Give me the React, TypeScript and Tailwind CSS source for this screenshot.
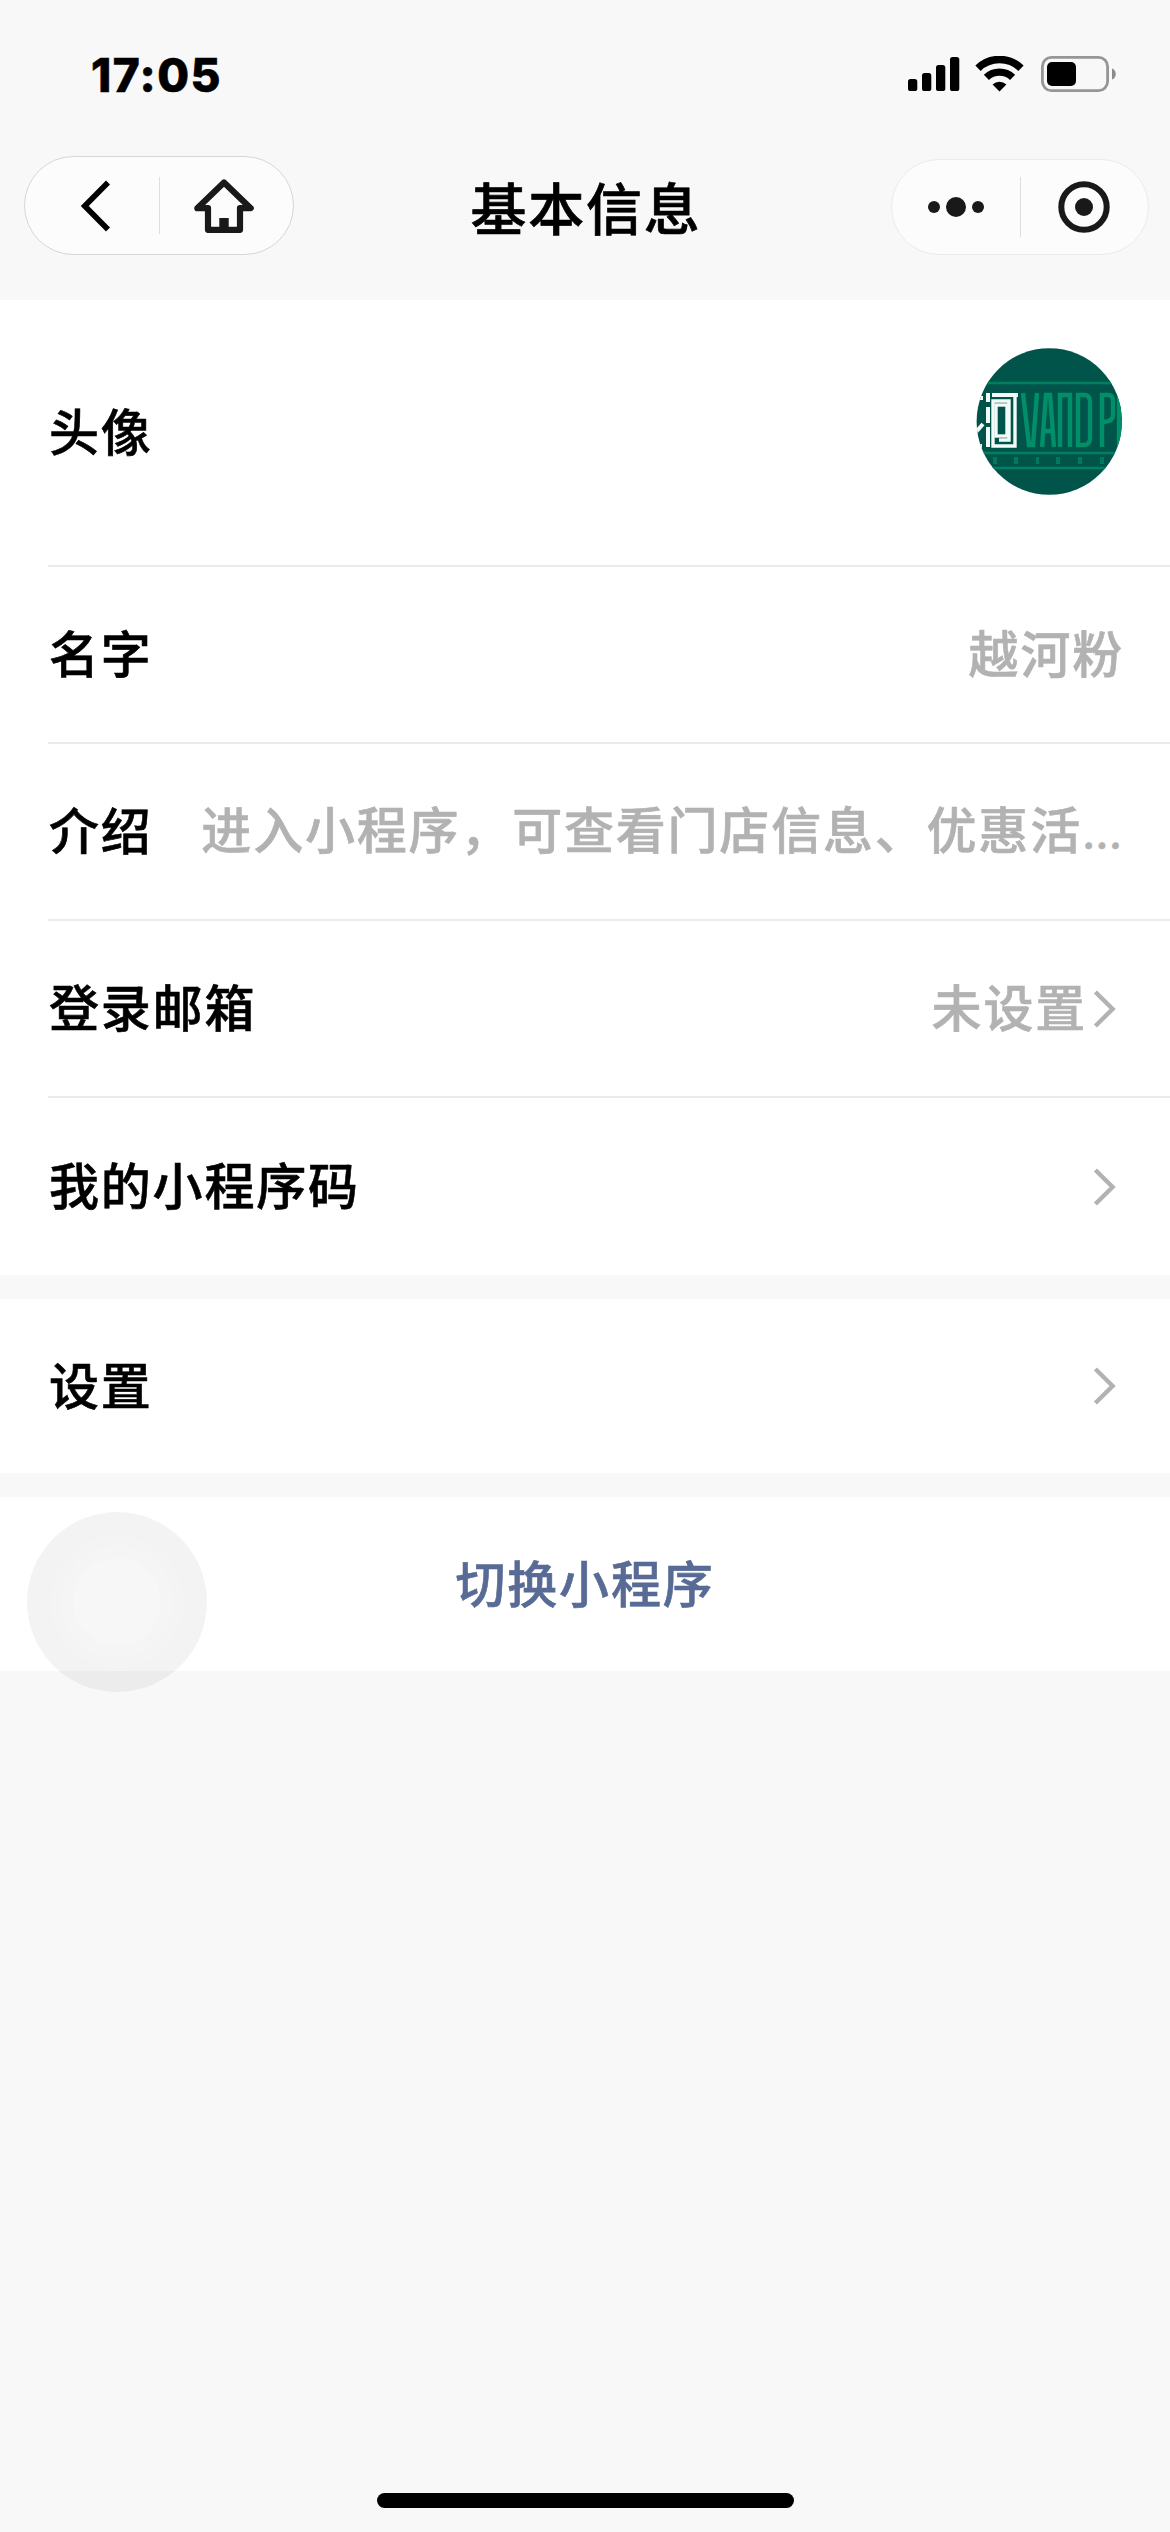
import type { ReactNode } from 'react'

function StatusBar() {
  return (
    <div className="flex h-[144px] items-start justify-between pt-[46px] pr-[54px] pl-[91px]">
      <span className="font-['Inter'] text-[46px] leading-[58px] font-extrabold tracking-[1.4px] text-black">
        17:05
      </span>
      <div className="flex items-center pt-[10px]">
        <svg width="52" height="36" viewBox="0 0 52 36">
          <rect x="0" y="23" width="9.3" height="12" rx="2.6" />
          <rect x="14" y="17" width="9.3" height="18" rx="2.6" />
          <rect x="28" y="9" width="9.3" height="26" rx="2.6" />
          <rect x="42" y="1" width="9.3" height="34" rx="2.6" />
        </svg>
        <svg className="ml-[15px]" width="50" height="36" viewBox="0 0 50 36">
          <path d="M3 12.2A31 31 0 0 1 46 12.2" fill="none" stroke="#000" strokeWidth="7.6" />
          <path d="M11.4 21.4A19 19 0 0 1 37.6 21.4" fill="none" stroke="#000" strokeWidth="7.4" />
          <path d="M24.5 35.4L17.6 28.4A10 10 0 0 1 31.4 28.4Z" />
        </svg>
        <svg className="ml-[16px]" width="75" height="36" viewBox="0 0 75 36">
          <rect x="1.4" y="1.4" width="65.2" height="33.2" rx="9" fill="none" stroke="#969696" strokeWidth="2.8" />
          <rect x="6" y="6" width="29" height="24" rx="5" />
          <path d="M71 12.5C76 14 76 22 71 23.5Z" fill="#8c8c8c" />
        </svg>
      </div>
    </div>
  )
}

function NavBar() {
  return (
    <div className="flex h-[156px] items-start justify-between pr-[21px] pl-[24px]">
      <div className="mt-[12px] flex h-[99px] w-[270px] items-center rounded-full border border-[#d6d6d6] bg-[#fcfcfc]">
        <div className="flex h-full w-[134px] items-center justify-center">
          <svg className="ml-[8px]" width="30" height="52" viewBox="0 0 30 52">
            <path d="M27 2.5L3.8 26L27 49.5" fill="none" stroke="#000" strokeWidth="5.6" />
          </svg>
        </div>
        <div className="h-[57px] w-px bg-[#dedede]" />
        <div className="flex h-full flex-1 items-center justify-center">
          <svg className="mr-[6px]" width="60" height="54" viewBox="0 0 60 54">
            <path
              d="M30 3.4L56.7 29.2H46V50.8H14V29.2H3.3Z"
              fill="none"
              stroke="#191919"
              strokeWidth="6.2"
              strokeLinejoin="round"
            />
            <rect x="25.3" y="39" width="9.4" height="12" fill="#191919" />
          </svg>
        </div>
      </div>
      <h1 className="mt-[22px] mr-[13px] text-[56px] leading-[80px] font-medium tracking-[1.8px] text-black [-webkit-text-stroke:0.7px]">
        基本信息
      </h1>
      <div className="mt-[15px] flex h-[96px] w-[258px] items-center rounded-full border border-[#ebebeb] bg-[#fcfcfc]">
        <div className="flex h-full w-[128px] items-center justify-center gap-[6px]">
          <span className="size-[12px] rounded-full bg-[#191919]" />
          <span className="size-[20px] rounded-full bg-[#191919]" />
          <span className="size-[12px] rounded-full bg-[#191919]" />
        </div>
        <div className="h-[60px] w-px bg-[#dedede]" />
        <div className="flex h-full flex-1 items-center justify-center">
          <svg width="52" height="52" viewBox="0 0 52 52">
            <circle cx="26" cy="26" r="22.7" fill="none" stroke="#191919" strokeWidth="6" />
            <circle cx="26" cy="26" r="9" fill="#191919" />
          </svg>
        </div>
      </div>
    </div>
  )
}

function Avatar() {
  return (
    <svg className="mb-[22px]" width="146" height="147" viewBox="0 0 146 147">
      <defs>
        <clipPath id="avatar">
          <ellipse cx="73.3" cy="73.5" rx="72.7" ry="73.3" />
        </clipPath>
      </defs>
      <g clipPath="url(#avatar)">
        <rect width="147" height="147" fill="#00544a" />
        <path d="M0 35H147M0 105H147M0 120H147" stroke="#00805f" strokeWidth="2.4" />
        <g fill="none" stroke="#008f68" strokeWidth="4.4">
          <path d="M47 45L53 97H57L61 45" />
          <path d="M66 99L70 47H74L78 99M67 83H77" />
          <path d="M84 99V47H94V99" />
          <path d="M102 47V97H108Q114 97 114 90V54Q114 47 108 47Z" />
          <path d="M126 99V47H132Q137 47 137 53V67Q137 74 126 74" />
          <path d="M143 45V99M143 74H147" />
        </g>
        <g fill="none" stroke="#f3fbf9" strokeWidth="4">
          <path d="M0 50H7M0 98H6M0 84L7 76M12 45V54M12 59V75M12 79V99" />
          <path d="M16 47H42" />
          <path d="M39 47V98H17V53H33V92H23" strokeWidth="3.4" />
          <rect x="20" y="57" width="11" height="31" strokeWidth="3.4" />
        </g>
        <g fill="#007a5c">
          <rect x="17" y="109" width="4" height="7" />
          <rect x="38" y="109" width="4" height="7" />
          <rect x="60" y="109" width="3" height="7" />
          <rect x="80" y="109" width="4" height="7" />
          <rect x="102" y="109" width="4" height="7" />
          <rect x="124" y="109" width="4" height="7" />
        </g>
      </g>
    </svg>
  )
}

function Chevron() {
  return (
    <svg className="mr-[6px] ml-[5px]" width="24" height="38" viewBox="0 0 24 38">
      <path d="M3.4 2L20.6 19L3.4 36" fill="none" stroke="#b2b2b2" strokeWidth="4.4" />
    </svg>
  )
}

function Row({ label, children, last }: { label: string; children?: ReactNode; last?: boolean }) {
  return (
    <div
      className={`ml-[48px] flex h-[177px] items-center justify-between pr-[48px] ${
        last ? '' : 'border-b-2 border-[#ebebeb]'
      }`}
    >
      <span className="mb-[7px] ml-px shrink-0 text-black">{label}</span>
      <div className="flex items-center text-[#b2b2b2]">{children}</div>
    </div>
  )
}

export default function App() {
  return (
    <div className="relative h-[2532px] w-[1170px] overflow-hidden bg-[#f8f8f8] font-['Noto_Sans_CJK_SC',sans-serif] text-[50px] leading-[72px] font-medium tracking-[1.8px] [-webkit-text-stroke:0.6px]">
      <StatusBar />
      <NavBar />

      <div className="bg-white">
        <div className="ml-[48px] flex h-[267px] items-center justify-between border-b-2 border-[#ebebeb] pr-[48px]">
          <span className="mb-[7px] ml-px text-black">头像</span>
          <Avatar />
        </div>
        <Row label="名字">
          <span className="-mr-[2px] mb-[7px]">越河粉</span>
        </Row>
        <Row label="介绍">
          <span className="mb-[3px] whitespace-nowrap">
            进入小程序，可查看门店信息、优惠活
            <span className="font-['Inter'] text-[44px] tracking-normal">...</span>
          </span>
        </Row>
        <Row label="登录邮箱">
          <span className="mb-[7px]">未设置</span>
          <Chevron />
        </Row>
        <Row label="我的小程序码" last>
          <Chevron />
        </Row>
      </div>

      <div className="mt-[24px] bg-white">
        <div className="ml-[48px] flex h-[174px] items-center justify-between pr-[48px]">
          <span className="mb-[7px] ml-px text-black">设置</span>
          <Chevron />
        </div>
      </div>

      <div className="mt-[24px] flex h-[174px] items-center justify-center bg-white text-[#576b95]">
        <span className="mb-[7px]">切换小程序</span>
      </div>

      {/* floating assistive button */}
      <div className="absolute top-[1512px] left-[27px] flex size-[180px] items-center justify-center rounded-full bg-black/[0.047]">
        <div className="flex size-[132px] items-center justify-center rounded-full bg-white/10">
          <div className="flex size-[112px] items-center justify-center rounded-full bg-white/10">
            <div className="size-[88px] rounded-full bg-white/20" />
          </div>
        </div>
      </div>

      <div className="absolute bottom-[24px] left-[377px] h-[15px] w-[417px] rounded-full bg-black" />
    </div>
  )
}
